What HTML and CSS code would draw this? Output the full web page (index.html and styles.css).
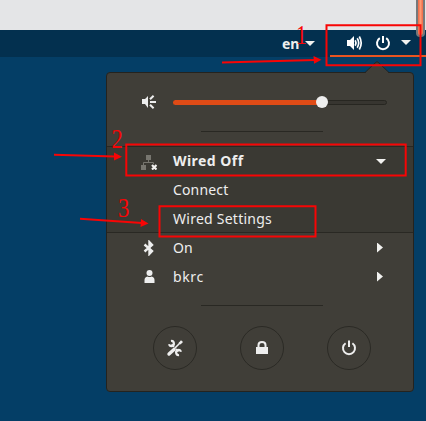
FILE: index.html
```
<!DOCTYPE html>
<html lang="en">
<head>
<meta charset="utf-8">
<title>System menu</title>
<link rel="stylesheet" href="styles.css">
</head>
<body>
<div class="window"></div>
<header class="topbar">
  <div class="lang"><span class="lang-name">en</span><i class="caret"></i></div>
  <div class="status">
    <svg class="status-volume" width="17" height="16" viewBox="0 0 17 16"><path fill="#fff" d="M1 5h3l4-4v14l-4-4H1z"/><g fill="none" stroke="#fff" stroke-width="1.7"><path d="M9.2 5.3q1.6 2.7 0 5.4"/><path d="M11.2 3.3q3 4.7 0 9.4"/><path d="M13.3 1.5q3.8 6.5 0 13"/></g></svg>
    <svg class="status-power" width="16" height="16" viewBox="0 0 16 16"><g fill="none" stroke="#fff" stroke-width="2"><path d="M4.8 3.2a6 6 0 1 0 6.4 0M8 1v7"/></g></svg>
    <i class="caret"></i>
  </div>
</header>
<main class="menu">
  <svg class="pointer" width="24" height="13" viewBox="0 0 24 13"><path d="M0 13L1 11L11 1.2Q12 .4 13 1.2L23 11L24 13z" fill="#403e38"/><path d="M0 11.5L11 1.2Q12 .4 13 1.2L24 11.5" fill="none" stroke="#24231f"/></svg>
  <div class="volume">
    <svg width="16" height="16" viewBox="0 0 16 16"><path fill="#eee" d="M1 5h3l3-3v12l-3-4H1z"/><path fill="none" stroke="#eee" stroke-width="2" d="M9 8h6M9 5.3l3.6-3.5M9 10.7l3.6 3.5"/></svg>
    <div class="slider"><div class="fill"></div><div class="knob"></div></div>
  </div>
  <div class="separator"></div>
  <section class="network">
    <div class="row title">
      <svg width="17" height="16" viewBox="0 0 17 16"><path fill="#77766f" d="M6 1h5v5H6zM1 11h5v5H1z"/><path fill="none" stroke="#77766f" d="M8.5 5v3.500M3.500 11V8.500h10V10"/><path stroke="#f2f2f0" stroke-width="2.2" d="M12 11l4.500 4.500M16.500 11l-4.500 4.500"/></svg>
      <span class="label wired">Wired Off</span><i class="caret"></i>
    </div>
    <div class="row"><span class="label connect">Connect</span></div>
    <div class="row last"><span class="label settings">Wired Settings</span></div>
  </section>
  <div class="row">
    <svg width="16" height="16" viewBox="0 0 16 16"><path fill="none" stroke="#eee" stroke-width="2.4" d="M4 4.500l7.500 6.500L9 13.700V2.300L11.500 5 4 11.500"/></svg>
    <span class="label on">On</span><i class="arrow"></i>
  </div>
  <div class="row">
    <svg width="16" height="16" viewBox="0 0 16 16"><circle cx="9" cy="4" r="3" fill="#eee"/><path fill="#eee" d="M4 14v-3q0-3 3-3.500q2 1 4 0q3 .5 3 3.500v3z"/></svg>
    <span class="label user">bkrc</span><i class="arrow"></i>
  </div>
  <div class="separator lower"></div>
  <div class="actions">
    <div class="action"><svg width="18" height="18" viewBox="0 0 18 18"><path d="M5.500 5.500l7 7" stroke="#eee" stroke-width="2"/><path d="M3 5.200A2.500 2.500 0 1 0 5 2" fill="none" stroke="#eee" stroke-width="2.200"/><path d="M15 12.800A2.500 2.500 0 1 0 13 16" fill="none" stroke="#eee" stroke-width="2.200"/><path d="M14 4L4 14" stroke="#403e38" stroke-width="3"/><path d="M14.500 3.500L8 10" stroke="#eee" stroke-width="1.600"/><path d="M12.500 4L15 1.300L17 3L14.500 5.500z" fill="#eee"/><path d="M8 10.500L3 15" stroke="#eee" stroke-width="3.400" stroke-linecap="round"/></svg></div>
    <div class="action"><svg width="18" height="18" viewBox="0 0 18 18"><path d="M3 8h12v7H3z" fill="#eee"/><path d="M5.500 9V6q0-3 3.500-3t3.500 3v3" fill="none" stroke="#eee" stroke-width="2"/></svg></div>
    <div class="action"><svg width="16" height="16" viewBox="0 0 16 16"><path d="M4.600 3.200a6 6 0 1 0 6.800 0M8 .5V7" fill="none" stroke="#eee" stroke-width="2"/></svg></div>
  </div>
</main>
<div class="scroller"></div>
<svg class="notes" width="426" height="421" viewBox="0 0 426 421">
  <g fill="none" stroke="#f80505" stroke-width="2">
    <path d="M326.500 25.300H420.500V65.300H326.500zM126.300 144.500H405.700V175.500H126.300zM159.500 206.300H315.500V236.500H159.500z"/>
    <path d="M222 62.500L315 60M54 154.700L115 156.500M80 218.700L142 223"/>
  </g>
  <path fill="#f80505" d="M313.500 56L321.500 59.800L314 63.800zM114 152.600L122 156.700L114 160.500zM141 219L148.500 223.500L140.500 227z"/>
  <g class="digits"><text transform="translate(296 44) scale(.8 1)">1</text><text transform="translate(111.500 148) scale(.84 1)">2</text><text transform="translate(118 217) scale(.84 1)">3</text></g>
</svg>
</body>
</html>
```
FILE: styles.css
```
* { box-sizing: border-box; }
body {
  margin: 0;
  width: 426px;
  height: 421px;
  position: relative;
  overflow: hidden;
  background: #043e66;
  color: #eee;
  font: 14px/20px "Noto Sans", sans-serif;
}
svg { display: block; flex: none; }
.window { height: 30px; background: #e4e5e7; }
.topbar {
  height: 27px;
  background: #03304f;
  display: flex;
  justify-content: flex-end;
}
.lang { display: flex; align-items: center; width: 48px; font-weight: 700; }
.lang-name { width: 18px; margin-right: 5px; font-size: 14px; }
.caret {
  width: 10px;
  height: 5px;
  flex: none;
  background: #f2f2f0;
  clip-path: polygon(0 0, 100% 0, 50% 100%);
}
.status {
  width: 96px;
  border-bottom: 2px solid #e95420;
  display: flex;
  align-items: center;
  padding-left: 16px;
}
.status-power { margin: 0 10px 0 12px; }
.menu {
  position: relative;
  width: 308px;
  height: 320px;
  margin: 15px 0 0 106px;
  border: 1px solid #24231f;
  border-radius: 4px;
  background: #403e38;
}
.pointer { position: absolute; left: 258px; top: -12px; }
.volume { height: 58px; display: flex; align-items: center; padding-left: 34px; }
.slider {
  width: 214px;
  height: 5px;
  margin-left: 16px;
  border-radius: 3px;
  background: #373530;
  border: 1px solid #272621;
  display: flex;
  align-items: center;
}
.fill {
  width: 148px;
  height: 5px;
  flex: none;
  margin-left: -1px;
  border-radius: 3px 0 0 3px;
  background: #df4b16;
}
.knob { width: 12px; height: 12px; flex: none; margin-left: -5px; border-radius: 50%; background: #eee; }
.separator { width: 122px; height: 1px; margin: 0 auto 14px 94px; background: #292823; }
.network {
  height: 87px;
  border-top: 1px solid #292823;
  border-bottom: 1px solid #292823;
  background: #3a3933;
}
.row { height: 29px; display: flex; align-items: center; padding: 0 30px 0 33px; }
.row.last { height: 27px; }
.row > svg { width: 17px; }
.title { font-weight: 700; padding-right: 27px; }
.label { margin-left: 16px; padding-bottom: 2px; white-space: nowrap; }
.row > .label:first-child { margin-left: 33px; }
.row.last > .label { padding-bottom: 0; }
.row > i { margin-left: auto; }
.wired { letter-spacing: .45px; }
.connect { letter-spacing: .15px; }
.settings { letter-spacing: .25px; }
.on { padding-bottom: 0; }
.user { padding-bottom: 0; letter-spacing: .6px; }
.arrow { width: 6px; height: 10px; background: #f2f2f0; clip-path: polygon(0 0, 100% 50%, 0 100%); }
.separator.lower { margin-top: 14px; margin-bottom: 20px; }
.actions { display: flex; gap: 43px; padding-left: 46px; }
.action {
  width: 44px;
  height: 44px;
  border: 1px solid #2b2a25;
  border-radius: 50%;
  display: flex;
  align-items: center;
  justify-content: center;
}
.scroller {
  position: absolute;
  left: 416px;
  top: 0;
  width: 9px;
  height: 37px;
  background: linear-gradient(90deg, #ed6745, #ff9a72, #ed6745);
  border: 2px solid #77787a;
  border-top: 0;
  border-radius: 0 0 4px 4px;
}
.notes { position: absolute; left: 0; top: 0; }
.digits { font: 27px "Liberation Serif", serif; fill: #f80505; }
```
